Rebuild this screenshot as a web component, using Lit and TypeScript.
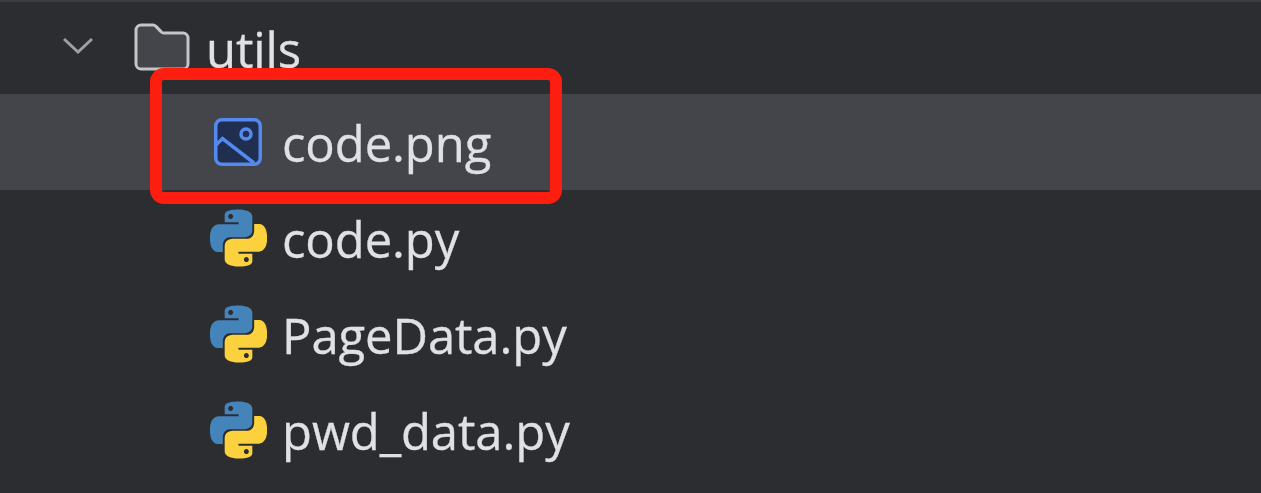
import { LitElement, css, html, svg } from 'lit';
import { customElement } from 'lit/decorators.js';

const pythonIcon = html`<svg class="icon py" viewBox="0 0 24 24">
  <path fill="#4484ba" fill-rule="evenodd" d="M14.25.18l.9.2.73.26.59.3.45.32.34.34.25.34.16.33.1.3.04.26.02.2-.01.13V8.5l-.05.63-.13.55-.21.46-.26.38-.3.31-.33.25-.35.19-.35.14-.33.1-.3.07-.26.04-.21.02H8.77l-.69.05-.59.14-.5.22-.41.27-.33.32-.27.35-.2.36-.15.37-.1.35-.07.32-.04.27-.02.21v3.06H3.17l-.21-.03-.28-.07-.32-.12-.35-.18-.36-.26-.36-.36-.35-.46-.32-.59-.28-.73-.21-.88-.14-1.05-.05-1.23.06-1.22.16-1.04.24-.87.32-.71.36-.57.4-.44.42-.33.42-.24.4-.16.36-.1.32-.05.24-.01h.16l.06.01h8.16v-.83H6.18l-.01-2.75-.02-.37.05-.34.11-.31.17-.28.25-.26.31-.23.38-.2.44-.18.51-.15.58-.12.64-.1.71-.06.77-.04.84-.02 1.27.05zM7.95 2.16l-.23.33-.08.41.08.41.23.34.33.22.41.09.41-.09.33-.22.23-.34.08-.41-.08-.41-.23-.33-.33-.22-.41-.09-.41.09z"/>
  <path fill="#fbd13e" fill-rule="evenodd" d="M21.04 6.11l.28.06.32.12.35.18.36.27.36.35.35.47.32.59.28.73.21.88.14 1.04.05 1.23-.06 1.23-.16 1.04-.24.86-.32.71-.36.57-.4.45-.42.33-.42.24-.4.16-.36.09-.32.05-.24.02-.16-.01h-8.22v.82h5.84l.01 2.76.02.36-.05.34-.11.31-.17.29-.25.25-.31.24-.38.2-.44.17-.51.15-.58.13-.64.09-.71.07-.77.04-.84.01-1.27-.04-1.07-.14-.9-.2-.73-.25-.59-.3-.45-.33-.34-.34-.25-.34-.16-.33-.1-.3-.04-.25-.02-.2.01-.13v-5.34l.05-.64.13-.54.21-.46.26-.38.3-.32.33-.24.35-.2.35-.14.33-.1.3-.06.26-.04.21-.02.13-.01h5.84l.69-.05.59-.14.5-.21.41-.28.33-.32.27-.35.2-.36.15-.36.1-.35.07-.32.04-.28.02-.21V6.07h2.09l.14.01zm-6.47 14.25l-.23.33-.08.41.08.41.23.33.33.23.41.08.41-.08.33-.23.23-.33.08-.41-.08-.41-.23-.33-.33-.23-.41-.08-.41.08z"/>
</svg>`;

const imageIcon = html`<svg class="icon img" viewBox="0 0 48 48">
  <rect x="1.75" y="1.75" width="44.5" height="44.5" rx="6" fill="#202f4f" stroke="#548af0" stroke-width="3.5"/>
  <circle cx="32" cy="16" r="5" fill="none" stroke="#548af0" stroke-width="3.5"/>
  <path d="M2 27 L8.5 20.5 L40 45" fill="none" stroke="#548af0" stroke-width="3.5"/>
</svg>`;

const folderIcon = html`<svg class="icon folder" viewBox="0 0 56 48">
  <path d="M2 7 a5 5 0 0 1 5-5 h12 a4 4 0 0 1 3 1.4 l5 5.2 a4 4 0 0 0 3 1.4 h19 a5 5 0 0 1 5 5 v26 a5 5 0 0 1-5 5 h-42 a5 5 0 0 1-5-5 z" fill="#43454a" stroke="#c3c5c9" stroke-width="3"/>
</svg>`;

const chevron = svg`<path d="M2 2 L16 15 L30 2" fill="none" stroke="#9da0a5" stroke-width="3"/>`;

@customElement('app-root')
export class AppRoot extends LitElement {
  static styles = css`
    :host {
      display: block;
      position: relative;
      height: 493px;
      overflow: hidden;
      background: #2b2d30;
      font-family: 'Open Sans', 'Noto Sans', sans-serif;
      font-size: 49px;
      color: #dfe1e5;
    }
    .edge {
      height: 2px;
      background: #3a3d40;
    }
    .row {
      display: flex;
      align-items: center;
      height: 96px;
      padding-left: 210px;
    }
    .row.first {
      height: 92px;
      padding-left: 62px;
    }
    .row.selected {
      background: #43454a;
    }
    .chevron {
      width: 32px;
      height: 17px;
      margin-right: 40px;
      margin-top: -5px;
    }
    .icon {
      flex: none;
      filter: blur(0.5px);
    }
    .folder {
      width: 56px;
      height: 48px;
      margin-right: 16px;
      margin-top: -2px;
    }
    .img {
      width: 48px;
      height: 48px;
      margin-left: 4px;
      margin-right: 20px;
    }
    .py {
      width: 57px;
      height: 58px;
      margin-right: 15px;
    }
    .name {
      white-space: pre;
      line-height: 1;
      margin-top: 2px;
      letter-spacing: -0.1px;
      -webkit-text-stroke: 0.3px currentColor;
      filter: blur(0.5px);
    }
    .highlight {
      position: absolute;
      left: 150px;
      top: 68px;
      width: 412px;
      height: 136px;
      box-sizing: border-box;
      border: 12px solid #fe1e10;
      border-radius: 14px;
    }
  `;

  render() {
    return html`
      <div class="edge"></div>
      <div class="row first">
        <svg class="chevron" viewBox="0 0 32 17">${chevron}</svg>
        ${folderIcon}
        <span class="name">utils</span>
      </div>
      <div class="row selected">${imageIcon}<span class="name">code.png</span></div>
      <div class="row">${pythonIcon}<span class="name">code.py</span></div>
      <div class="row">${pythonIcon}<span class="name">PageData.py</span></div>
      <div class="row">${pythonIcon}<span class="name">pwd_data.py</span></div>
      <div class="highlight"></div>
    `;
  }
}
